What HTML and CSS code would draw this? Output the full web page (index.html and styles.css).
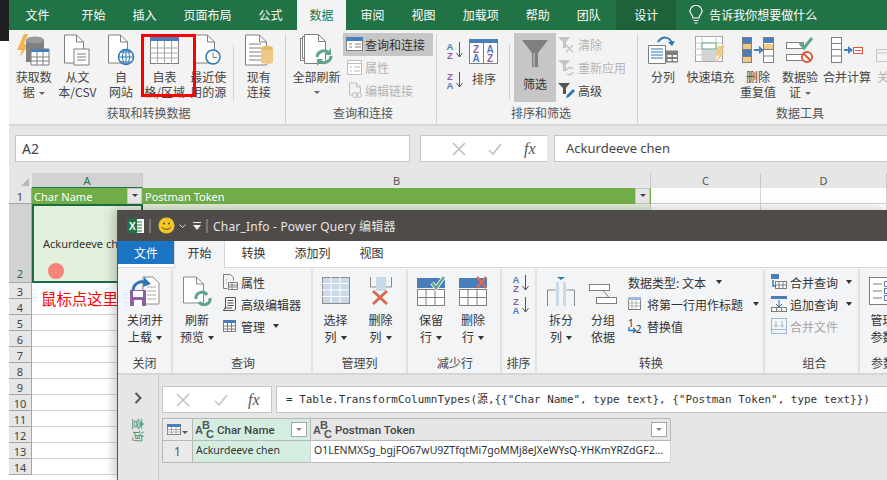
FILE: index.html
```html
<!DOCTYPE html>
<html>
<head>
    <meta charset="utf-8">
    <meta name="viewport" content="width=device-width, initial-scale=1.0">
    <title>Excel - Power Query</title>
    <link rel="stylesheet" href="styles.css">
</head>
<body>

<div class="side-strip"></div>

<!-- excel window -->
<div class="excel">
    <div class="tabs">
        <span class="tab tab-file">文件</span>
        <span class="tab">开始</span>
        <span class="tab">插入</span>
        <span class="tab">页面布局</span>
        <span class="tab">公式</span>
        <span class="tab tab-on">数据</span>
        <span class="tab">审阅</span>
        <span class="tab">视图</span>
        <span class="tab">加载项</span>
        <span class="tab">帮助</span>
        <span class="tab">团队</span>
        <span class="tab tab-ctx">设计</span>
        <span class="tell">
            <svg width="16" height="20" viewBox="0 0 16 20" fill="none" stroke="#fff" stroke-width="1.2"><path d="M5 13c0-3-3-4-3-7a6 5.500 0 0 1 12 0c0 3-3 4-3 7z"/><path d="M5.500 15.500h5M6.500 18h3"/></svg>
            告诉我你想要做什么
        </span>
    </div>

    <div class="ribbon">
        <div class="group g-get">
            <div class="group-body">
                <div class="big">
                    <svg width="34" height="32" viewBox="0 0 34 32"><path d="M7 0L0 16h5l-2 7L12 10H7l4-10z" fill="#f0b64a"/><path d="M9 6h18v22H9z" fill="#7f7f7f"/><ellipse cx="18" cy="6" rx="9" ry="3.500" fill="#9a9a9a"/><path d="M14 15h18v16H14z" fill="#fff" stroke="#7f7f7f"/><path d="M14 15h18v3H14z" fill="#4a7ebb"/><path d="M14 23h18M14 27h18M20 18v13M26 18v13" stroke="#7f7f7f" fill="none"/></svg>
                    <span>获取数</span><span>据<i class="caret"></i></span>
                </div>
                <div class="big">
                    <svg width="28" height="32" viewBox="0 0 28 32" fill="none" stroke="#7f7f7f"><path d="M1.500 1h12l7 7v21h-19z" fill="#fff"/><path d="M13.500 1v7h7"/><path d="M11 15h15v16H11z" fill="#fff"/><path d="M14 20h9M14 23h9M14 26h9"/></svg>
                    <span>从文</span><span>本/CSV</span>
                </div>
                <div class="big">
                    <svg width="28" height="32" viewBox="0 0 28 32" fill="none"><path d="M1.500 1h12l7 7v21h-19z" fill="#fff" stroke="#7f7f7f"/><path d="M13.500 1v7h7" stroke="#7f7f7f"/><circle cx="19" cy="23" r="7.500" fill="#fff" stroke="#2e75b6" stroke-width="1.500"/><path d="M11.500 23h15M19 15.500v15M14 18h10M14 28h10" stroke="#2e75b6"/><ellipse cx="19" cy="23" rx="3.500" ry="7.500" stroke="#2e75b6"/></svg>
                    <span>自</span><span>网站</span>
                </div>
                <div class="big">
                    <svg width="30" height="32" viewBox="0 0 30 32"><rect x="0.500" y="2.500" width="28" height="27" fill="#fff" stroke="#7f7f7f"/><rect x="0" y="2" width="29" height="5" fill="#4a7ebb"/><path d="M0 14h29M0 19h29M0 24h29M7.500 7v23M14.500 7v23M21.500 7v23" stroke="#a6a6a6" fill="none"/></svg>
                    <span>自表</span><span>格/区域</span>
                </div>
                <div class="big">
                    <svg width="28" height="32" viewBox="0 0 28 32" fill="none" stroke="#7f7f7f"><path d="M1.500 1h12l7 7v21h-19z" fill="#fff"/><path d="M13.500 1v7h7"/><circle cx="19" cy="23" r="7" fill="#fff" stroke="#2e75b6" stroke-width="1.500"/><path d="M19 18.500V23.500h4"/></svg>
                    <span>最近使</span><span>用的源</span>
                </div>
                <div class="sep"></div>
                <div class="big">
                    <svg width="30" height="32" viewBox="0 0 30 32" fill="none" stroke="#7f7f7f"><path d="M1.500 1h14l7 7v23h-21z" fill="#fff"/><path d="M15.500 1v7h7M5 10h12M5 14h12M5 18h12M5 22h12M5 26h12"/><path d="M17 14h12v14c0 2.500-12 2.500-12 0z" fill="#f0c987" stroke="none"/><ellipse cx="23" cy="14" rx="6" ry="2.200" fill="#e7b765" stroke="none"/></svg>
                    <span>现有</span><span>连接</span>
                </div>
            </div>
            <div class="group-name">获取和转换数据</div>
        </div>

        <div class="group g-conn">
            <div class="group-body">
                <div class="big big-all">
                    <svg width="36" height="34" viewBox="0 0 36 34" fill="none" stroke="#7f7f7f"><path d="M1.500 4.500h12v22h-12z" fill="#fff"/><path d="M3.500 2.500h14v22h-14z" fill="#fff"/><path d="M5.500 0.500h14l7 7v22h-21z" fill="#fff"/><path d="M19.500 0.500v7h7"/><path d="M18 23a7 7 0 0 1 12-4" stroke="#5fa58c" stroke-width="3"/><path d="M32 22a7 7 0 0 1-12 4.500" stroke="#5fa58c" stroke-width="3"/><path d="M32 14v7h-6zM18 32v-7h6z" fill="#5fa58c" stroke="none"/></svg>
                    <span>全部刷新</span><i class="caret caret-own"></i>
                </div>
                <div class="stack">
                    <div class="small small-on">
                        <svg width="18" height="15" viewBox="0 0 18 15"><rect x="0.500" y="0.500" width="16" height="13" fill="#fff" stroke="#7f7f7f"/><rect width="17" height="4" fill="#4a7ebb"/><path d="M9 7h6M9 10h6M3 7h3M3 10h3" stroke="#7f7f7f"/></svg>
                        查询和连接
                    </div>
                    <div class="small small-off">
                        <svg width="18" height="15" viewBox="0 0 18 15" fill="none" stroke="#bdbdbd"><rect x="1.500" y="0.500" width="14" height="14" fill="#fff"/><path d="M1 3.500h15M4 7h2M8 7h6M4 11h2M8 11h6"/></svg>
                        属性
                    </div>
                    <div class="small small-off">
                        <svg width="18" height="17" viewBox="0 0 18 17" fill="none" stroke="#bdbdbd"><path d="M3.500 1h7l4 4v6M3.500 1v12h3M10.500 1v4h4"/><circle cx="9" cy="13" r="2.500"/><circle cx="13" cy="13" r="2.500"/></svg>
                        编辑链接
                    </div>
                </div>
            </div>
            <div class="group-name">查询和连接</div>
        </div>

        <div class="group g-sort">
            <div class="group-body">
                <div class="sort-col">
                    <div class="sort-item"><span class="az"><b class="c-a">A</b><b class="c-z">Z</b></span><svg width="7" height="16" viewBox="0 0 7 16" fill="none" stroke="#555"><path d="M3.500 0v15M0.500 11l3 4 3-4"/></svg></div>
                    <div class="sort-item"><span class="az"><b class="c-z">Z</b><b class="c-a">A</b></span><svg width="7" height="16" viewBox="0 0 7 16" fill="none" stroke="#555"><path d="M3.500 0v15M0.500 11l3 4 3-4"/></svg></div>
                </div>
                <div class="big big-sort">
                    <svg class="sort-big" width="30" height="26" viewBox="0 0 30 26" fill="none"><rect x="0.500" y="0.500" width="28" height="24" fill="#fff" stroke="#7f7f7f"/><rect width="29" height="4" fill="#4a7ebb"/><path d="M14.500 4v21" stroke="#7f7f7f"/><text x="7" y="14" class="st-z">Z</text><text x="7" y="23" class="st-a">A</text><text x="21" y="14" class="st-a">A</text><text x="21" y="23" class="st-z">Z</text></svg>
                    <span>排序</span>
                </div>
                <div class="sep sep-sort"></div>
                <div class="filter-btn">
                    <svg width="28" height="28" viewBox="0 0 28 28"><path d="M1 0h26L17 13v14h-6V13z" fill="#7f7f7f"/><path d="M12 13h2v14h-2z" fill="#a6a6a6"/></svg>
                    <span>筛选</span>
                </div>
                <div class="stack stack-filter">
                    <div class="small small-off">
                        <svg width="18" height="16" viewBox="0 0 18 16"><path d="M0 0h12l-4 5v6H5V5z" fill="#c4c4c4"/><path d="M8 8l7 7M15 8l-7 7" stroke="#c4c4c4" stroke-width="1.500"/></svg>
                        清除
                    </div>
                    <div class="small small-off">
                        <svg width="18" height="16" viewBox="0 0 18 16" fill="none"><path d="M0 0h12l-4 5v6H5V5z" fill="#c4c4c4"/><path d="M8 11a4 4 0 0 1 7-2M15 12a4 4 0 0 1-6 2" stroke="#c4c4c4" stroke-width="1.500"/></svg>
                        重新应用
                    </div>
                    <div class="small">
                        <svg width="18" height="16" viewBox="0 0 18 16"><path d="M0 0h12l-4 5v6H5V5z" fill="#555"/><path d="M8 15l1-3 6-6 2 2-6 6z" fill="#2e75b6"/></svg>
                        高级
                    </div>
                </div>
            </div>
            <div class="group-name">排序和筛选</div>
        </div>

        <div class="group g-tools">
            <div class="group-body">
                <div class="big b-split">
                    <svg width="32" height="28" viewBox="0 0 32 28" fill="none"><path d="M1.500 9.500h17v18h-17z" fill="#fff" stroke="#7f7f7f"/><path d="M4 13h12M4 16h12M4 19h12M4 22h12" stroke="#2e75b6"/><path d="M19 14.500h12v12H19z" fill="#7f7f7f"/><path d="M20.500 19h4v2h-4zM26 19h4v2h-4zM20.500 23h4v2h-4zM26 23h4v2h-4z" fill="#fff"/><path d="M11 6c4-6 11-6 14 1" stroke="#2e75b6" stroke-width="2"/><path d="M21 6l4 4 3-5z" fill="#2e75b6"/></svg>
                    <span>分列</span>
                </div>
                <div class="big b-flash">
                    <svg width="32" height="28" viewBox="0 0 32 28" fill="none"><rect x="0.500" y="0.500" width="27" height="25" fill="#fff" stroke="#a6a6a6"/><path d="M0 7h27M0 13h27M0 19h27M7 0v26M21 0v26" stroke="#c8c8c8"/><rect x="7" y="7" width="14" height="6" fill="#fff" stroke="#5fa58c"/><rect x="7" y="14" width="14" height="11" fill="#d4d4d4"/><path d="M23 10h7l-4 6h4l-9 11 3-8h-4z" fill="#f0c987"/></svg>
                    <span>快速填充</span>
                </div>
                <div class="big b-dedupe">
                    <svg width="32" height="26" viewBox="0 0 32 26"><rect width="10" height="26" fill="#7f7f7f"/><rect x="1" y="1" width="8" height="5" fill="#4a7ebb"/><rect x="1" y="7" width="8" height="5" fill="#f0c987"/><rect x="1" y="13" width="8" height="6" fill="#4a7ebb"/><rect x="1" y="20" width="8" height="5" fill="#f0c987"/><path d="M12 13h7" stroke="#4a7ebb" stroke-width="2"/><path d="M17 9l5 4-5 4z" fill="#4a7ebb"/><rect x="21.500" y="0.500" width="10" height="25" fill="#fff" stroke="#7f7f7f"/><rect x="22" y="1" width="9" height="5" fill="#4a7ebb"/><rect x="22" y="7" width="9" height="5" fill="#f0c987"/><path d="M22 12.500h9M22 19h9" stroke="#7f7f7f"/></svg>
                    <span>删除</span><span>重复值</span>
                </div>
                <div class="big b-valid">
                    <svg width="28" height="28" viewBox="0 0 28 28" fill="none"><rect x="0.500" y="6.500" width="17" height="6" fill="#fff" stroke="#7f7f7f"/><rect x="0.500" y="18.500" width="17" height="6" fill="#fff" stroke="#7f7f7f"/><path d="M14 7l4 5 8-10" stroke="#5fa58c" stroke-width="3"/><circle cx="21" cy="21" r="5" fill="#fff" stroke="#d9573b" stroke-width="2"/><path d="M17.500 17.500l7 7" stroke="#d9573b" stroke-width="2"/></svg>
                    <span>数据验</span><span>证<i class="caret"></i></span>
                </div>
                <div class="big b-merge">
                    <svg width="32" height="26" viewBox="0 0 32 26" fill="none"><rect x="0.500" y="0.500" width="10" height="25" fill="#fff" stroke="#7f7f7f"/><path d="M0 6.500h10M0 12.500h10M0 19h10" stroke="#7f7f7f"/><path d="M13 13h6" stroke="#4a7ebb" stroke-width="2"/><path d="M17 9l5 4-5 4z" fill="#4a7ebb"/><rect x="22.500" y="10.500" width="9" height="6" fill="#fff" stroke="#d9573b"/><path d="M24 13.500h6" stroke="#d9573b"/></svg>
                    <span>合并计算</span>
                </div>
                <div class="big b-more">
                    <svg width="14" height="26" viewBox="0 0 14 26" fill="none" stroke="#c4c4c4"><path d="M0.500 12.500h13v12h-13zM0 16h14"/></svg>
                    <span class="off-text">关</span>
                </div>
            </div>
            <div class="group-name">数据工具</div>
        </div>
    </div>

    <!-- formula row -->
    <div class="formula-row">
        <div class="name-box">A2</div>
        <div class="fx-box">
            <svg width="14" height="14" viewBox="0 0 14 14" stroke="#bdbdbd" stroke-width="1.600" fill="none"><path d="M1 1l12 12M13 1L1 13"/></svg>
            <svg width="14" height="14" viewBox="0 0 14 14" stroke="#bdbdbd" stroke-width="1.600" fill="none"><path d="M1 8l4 4 8-10"/></svg>
            <span class="fx">fx</span>
        </div>
        <div class="formula-text">Ackurdeeve chen</div>
    </div>

    <!-- sheet -->
    <div class="sheet">
        <div class="corner"><i></i></div>
        <div class="col-head col-on">A</div>
        <div class="col-head">B</div>
        <div class="col-head">C</div>
        <div class="col-head">D</div>

        <div class="row-head">1</div>
        <div class="cell cell-title">Char Name<i class="cell-filter"></i></div>
        <div class="cell cell-title">Postman Token<i class="cell-filter"></i></div>
        <div class="cell"></div>
        <div class="cell"></div>

        <div class="row-head row-tall">2</div>
        <div class="cell cell-sel">Ackurdeeve chen<i class="click-dot"></i></div>
        <div class="cell cell-green"></div>
        <div class="cell"></div>
        <div class="cell"></div>

        <div class="row-head">3</div>
        <div class="cell cell-note">鼠标点这里</div>
        <div class="cell"></div>
        <div class="cell"></div>
        <div class="cell"></div>

        <div class="row-head">4</div><div class="cell"></div><div class="cell"></div><div class="cell"></div><div class="cell"></div>
        <div class="row-head">5</div><div class="cell"></div><div class="cell"></div><div class="cell"></div><div class="cell"></div>
        <div class="row-head">6</div><div class="cell"></div><div class="cell"></div><div class="cell"></div><div class="cell"></div>
        <div class="row-head">7</div><div class="cell"></div><div class="cell"></div><div class="cell"></div><div class="cell"></div>
        <div class="row-head">8</div><div class="cell"></div><div class="cell"></div><div class="cell"></div><div class="cell"></div>
        <div class="row-head">9</div><div class="cell"></div><div class="cell"></div><div class="cell"></div><div class="cell"></div>
        <div class="row-head">10</div><div class="cell"></div><div class="cell"></div><div class="cell"></div><div class="cell"></div>
        <div class="row-head">11</div><div class="cell"></div><div class="cell"></div><div class="cell"></div><div class="cell"></div>
        <div class="row-head">12</div><div class="cell"></div><div class="cell"></div><div class="cell"></div><div class="cell"></div>
        <div class="row-head">13</div><div class="cell"></div><div class="cell"></div><div class="cell"></div><div class="cell"></div>
        <div class="row-head">14</div><div class="cell"></div><div class="cell"></div><div class="cell"></div><div class="cell"></div>
    </div>
</div>

<!-- red box drawn on the screenshot -->
<div class="red-box"></div>

<!-- power query window -->
<div class="pq">
    <div class="pq-title">
        <svg width="17" height="16" viewBox="0 0 17 16"><rect x="7" y="1" width="10" height="14" fill="#fff"/><path d="M9 4h6M9 7h6M9 10h6M9 13h6" stroke="#217346"/><path d="M0 1.500L10 0v16L0 14.500z" fill="#217346"/><text x="2" y="12" class="x-mark">X</text></svg>
        <i class="pq-bar"></i>
        <svg class="smile" width="17" height="17" viewBox="0 0 17 17" fill="none"><circle cx="8.500" cy="8.500" r="8" fill="#f7c51e"/><circle cx="6" cy="6.500" r="1" fill="#4f4b48"/><circle cx="11" cy="6.500" r="1" fill="#4f4b48"/><path d="M4 10c1 3 8 3 9 0" stroke="#4f4b48"/></svg>
        <svg class="chev" width="7" height="4" viewBox="0 0 7 4" fill="none" stroke="#ddd"><path d="M0.500 0.500l3 3 3-3"/></svg>
        <svg class="qat" width="8" height="8" viewBox="0 0 8 8"><path d="M0 0h8v1H0z" fill="#eee"/><path d="M0 3h8L4 8z" fill="#eee"/></svg>
        <i class="pq-bar"></i>
        <span class="pq-name">Char_Info - Power Query 编辑器</span>
    </div>

    <div class="pq-tabs">
        <span class="pq-tab pq-file">文件</span>
        <span class="pq-tab pq-on">开始</span>
        <span class="pq-tab">转换</span>
        <span class="pq-tab">添加列</span>
        <span class="pq-tab">视图</span>
    </div>

    <div class="pq-ribbon">
        <div class="pg pg-close">
            <div class="pg-body">
                <div class="pbig">
                    <svg width="30" height="30" viewBox="0 0 30 30" fill="none"><path d="M13 1h10l6 6v21H13z" fill="#fff" stroke="#8a8a8a"/><path d="M17 11h9M17 15h9M17 19h9M17 23h9" stroke="#a6a6a6"/><path d="M3 14c1-7 8-10 13-7" stroke="#2e75b6" stroke-width="3"/><path d="M14 1l7 7-8 3z" fill="#2e75b6"/><rect x="0" y="14" width="16" height="16" fill="#8e5ea2"/><rect x="3" y="15" width="10" height="6" fill="#fff"/><rect x="4" y="24" width="8" height="6" fill="#fff"/></svg>
                    <span>关闭并</span><span>上载<i class="caret caret-dark"></i></span>
                </div>
            </div>
            <div class="pg-name">关闭</div>
        </div>
        <div class="pg pg-query">
            <div class="pg-body">
                <div class="pbig pbig-refresh">
                    <svg width="30" height="30" viewBox="0 0 30 30" fill="none"><path d="M1.500 1h13l7 7v19h-20z" fill="#fff" stroke="#8a8a8a"/><path d="M14.500 1v7h7" stroke="#8a8a8a"/><path d="M14 23a6 6 0 0 1 11-4" stroke="#5fa58c" stroke-width="3"/><path d="M28 22a6 6 0 0 1-11 4" stroke="#5fa58c" stroke-width="3"/></svg>
                    <span>刷新</span><span>预览<i class="caret caret-dark"></i></span>
                </div>
                <div class="pstack pstack-query">
                    <div class="psmall">
                        <svg width="16" height="16" viewBox="0 0 16 16" fill="none" stroke="#7f7f7f"><path d="M1.500 0.500h7l3 3v3M1.500 0.500v14h4M4 6h1M4 9h1"/><path d="M6.500 8.500h9v7h-9z" fill="#fff"/><path d="M6 11h9M6 13h9M10 9v6" /></svg>
                        属性
                    </div>
                    <div class="psmall">
                        <svg width="16" height="16" viewBox="0 0 16 16" fill="none" stroke="#555"><path d="M3.500 12V1.500h10V12c0 2-1 2.500-2 2.500H1c1-.5 1.500-1 1.500-2.500H10"/><path d="M5.500 4.500h6M5.500 7h6M5.500 9.500h6"/></svg>
                        高级编辑器
                    </div>
                    <div class="psmall">
                        <svg width="16" height="14" viewBox="0 0 16 14" fill="none"><rect x="1.500" y="1.500" width="12" height="11" fill="#fff" stroke="#7f7f7f"/><rect x="1" y="1" width="13" height="3" fill="#4a7ebb"/><path d="M1 7h13M1 10h13M5.500 4v9M9.500 4v9" stroke="#7f7f7f"/></svg>
                        管理<i class="caret caret-dark"></i>
                    </div>
                </div>
            </div>
            <div class="pg-name">查询</div>
        </div>
        <div class="pg pg-cols">
            <div class="pg-body">
                <div class="pbig">
                    <svg width="28" height="28" viewBox="0 0 28 28"><rect x="0.500" y="0.500" width="27" height="26" fill="#c9d9ea" stroke="#8a8a8a"/><path d="M0 6.500h27M0 13h27M0 19.500h27M9 0v26M18 0v26" stroke="#fff"/></svg>
                    <span>选择</span><span>列<i class="caret caret-dark"></i></span>
                </div>
                <div class="pbig">
                    <svg width="28" height="28" viewBox="0 0 28 28" fill="none"><path d="M3.500 0v10h21V0" stroke="#8a8a8a"/><path d="M9 0h10v14H9z" fill="#c9d9ea"/><path d="M6 14l14 13M20 14L6 27" stroke="#d9694f" stroke-width="3"/></svg>
                    <span>删除</span><span>列<i class="caret caret-dark"></i></span>
                </div>
            </div>
            <div class="pg-name">管理列</div>
        </div>
        <div class="pg pg-rows">
            <div class="pg-body">
                <div class="pbig">
                    <svg width="28" height="30" viewBox="0 0 28 30" fill="none"><rect x="0" y="2" width="28" height="10" fill="#4a7ebb"/><rect x="0.500" y="13.500" width="27" height="16" stroke="#7f7f7f" fill="#fff"/><path d="M0 21.500h27M9 13v16M18 13v16" stroke="#7f7f7f"/><path d="M15 7l4 5 8-11" stroke="#fff" stroke-width="4"/><path d="M15 7l4 5 8-11" stroke="#5fa58c" stroke-width="2.400"/></svg>
                    <span>保留</span><span>行<i class="caret caret-dark"></i></span>
                </div>
                <div class="pbig">
                    <svg width="28" height="30" viewBox="0 0 28 30" fill="none"><rect x="0" y="2" width="28" height="10" fill="#4a7ebb"/><rect x="0.500" y="13.500" width="27" height="16" stroke="#7f7f7f" fill="#fff"/><path d="M0 21.500h27M9 13v16M18 13v16" stroke="#7f7f7f"/><path d="M18 1l9 11M27 1l-9 11" stroke="#d9694f" stroke-width="2.400"/></svg>
                    <span>删除</span><span>行<i class="caret caret-dark"></i></span>
                </div>
            </div>
            <div class="pg-name">减少行</div>
        </div>
        <div class="pg pg-psort">
            <div class="pg-body">
                <div class="sort-col sort-col-pq">
                    <div class="sort-item"><span class="az"><b class="c-a">A</b><b class="c-z">Z</b></span><svg width="7" height="16" viewBox="0 0 7 16" fill="none" stroke="#555"><path d="M3.500 0v15M0.500 11l3 4 3-4"/></svg></div>
                    <div class="sort-item"><span class="az"><b class="c-z">Z</b><b class="c-a">A</b></span><svg width="7" height="16" viewBox="0 0 7 16" fill="none" stroke="#555"><path d="M3.500 0v15M0.500 11l3 4 3-4"/></svg></div>
                </div>
            </div>
            <div class="pg-name">排序</div>
        </div>
        <div class="pg pg-trans">
            <div class="pg-body">
                <div class="pbig pbig-split">
                    <svg width="28" height="30" viewBox="0 0 28 30" fill="none"><path d="M0.500 30V14h8M27.500 30V14h-8" stroke="#8a8a8a"/><path d="M9 6h3v24H9zM16 6h3v24h-3z" fill="#c9d9ea"/><path d="M10 1h8l-4 3z" fill="#2e75b6"/></svg>
                    <span>拆分</span><span>列<i class="caret caret-dark"></i></span>
                </div>
                <div class="pbig pbig-group">
                    <svg width="28" height="30" viewBox="0 0 28 30" fill="none" stroke="#7f7f7f"><rect x="0.500" y="8.500" width="20" height="6" fill="#fff"/><rect x="7.500" y="21.500" width="20" height="6" fill="#fff"/><path d="M14 14.500l6 7"/></svg>
                    <span>分组</span><span>依据</span>
                </div>
                <div class="pstack pstack-trans">
                    <div class="psmall psmall-plain">数据类型: 文本<i class="caret caret-dark"></i></div>
                    <div class="psmall">
                        <svg width="14" height="14" viewBox="0 0 14 14"><rect x="0.500" y="0.500" width="12" height="12" fill="#fff" stroke="#7f7f7f"/><rect width="13" height="3" fill="#9fb8d6"/><path d="M0 6h12M0 9h12M4 3v9M8 3v9" stroke="#b0b0b0"/></svg>
                        将第一行用作标题<i class="caret caret-dark"></i>
                    </div>
                    <div class="psmall">
                        <span class="repl"><b>1</b><svg width="9" height="7" viewBox="0 0 9 7" fill="none" stroke="#2e75b6" stroke-width="1.400"><path d="M1 0v3.500h6M5 1l3 2.500L5 6"/></svg><b>2</b></span>
                        替换值
                    </div>
                </div>
            </div>
            <div class="pg-name">转换</div>
        </div>
        <div class="pg pg-comb">
            <div class="pg-body">
                <div class="pstack pstack-comb">
                    <div class="psmall">
                        <svg width="16" height="16" viewBox="0 0 16 16" fill="none"><path d="M0 0h8v5H0z" fill="#4a7ebb"/><rect x="4.500" y="7.500" width="11" height="7" fill="#fff" stroke="#7f7f7f"/><path d="M4 11h11M8 7v8M12 7v8" stroke="#7f7f7f"/><path d="M2 6v6h3" stroke="#2e75b6" stroke-width="1.400"/></svg>
                        合并查询<i class="caret caret-dark"></i>
                    </div>
                    <div class="psmall">
                        <svg width="16" height="16" viewBox="0 0 16 16" fill="none"><path d="M0 0h16v3H0z" fill="#4a7ebb"/><path d="M8 4v7M5 8l3 3 3-3" stroke="#2e75b6"/><rect x="0.500" y="11.500" width="15" height="4" stroke="#7f7f7f"/><path d="M5.500 11v5M10.500 11v5" stroke="#7f7f7f"/></svg>
                        追加查询<i class="caret caret-dark"></i>
                    </div>
                    <div class="psmall psmall-off">
                        <svg width="16" height="16" viewBox="0 0 16 16" fill="none" stroke="#9fb8d6"><rect x="0.500" y="0.500" width="15" height="15"/><path d="M0 11.500h16M5 3v6M3 7l2 2 2-2M11 3v6M9 7l2 2 2-2"/></svg>
                        合并文件
                    </div>
                </div>
            </div>
            <div class="pg-name">组合</div>
        </div>
        <div class="pg pg-param">
            <div class="pg-body">
                <div class="pbig">
                    <svg width="28" height="28" viewBox="0 0 28 28" fill="none"><rect x="0.500" y="0.500" width="27" height="27" fill="#fff" stroke="#7f7f7f"/><path d="M4 7h9M4 14h9M4 21h9" stroke="#7f7f7f"/><path d="M15.500 4.500h8v5h-8zM15.500 11.500h8v5h-8zM15.500 18.500h8v5h-8z" stroke="#4a7ebb"/></svg>
                    <span>管理</span><span>参数</span>
                </div>
            </div>
            <div class="pg-name">参数</div>
        </div>
    </div>

    <div class="pq-body">
        <div class="pq-side">
            <svg width="9" height="12" viewBox="0 0 9 12" fill="none" stroke="#555" stroke-width="2"><path d="M1.500 1l5 5-5 5"/></svg>
            <span class="pq-side-text">查询</span>
        </div>
        <div class="pq-main">
            <div class="pq-formula">
                <div class="pq-fx-box">
                    <svg width="14" height="14" viewBox="0 0 14 14" stroke="#c4c4c4" stroke-width="1.600" fill="none"><path d="M1 1l12 12M13 1L1 13"/></svg>
                    <svg width="14" height="14" viewBox="0 0 14 14" stroke="#c4c4c4" stroke-width="1.600" fill="none"><path d="M1 8l4 4 8-10"/></svg>
                    <span class="fx">fx</span>
                </div>
                <div class="pq-formula-text">= Table.TransformColumnTypes(源,{{"Char Name", type text}, {"Postman Token", type text}})</div>
            </div>
            <div class="data">
                <div class="d-corner">
                    <svg width="14" height="11" viewBox="0 0 14 11" fill="none"><rect x="0.500" y="0.500" width="13" height="10" fill="#fff" stroke="#7f7f7f"/><rect width="14" height="3" fill="#4a7ebb"/><path d="M0 5.500h13M0 8h13M4.500 3v8M9 3v8" stroke="#a6a6a6"/></svg>
                    <i class="d-arrow"></i>
                </div>
                <div class="d-head d-head-on"><span class="abc">A<sup>B</sup><sub>C</sub></span>Char Name<i class="d-filter"></i></div>
                <div class="d-head"><span class="abc">A<sup>B</sup><sub>C</sub></span>Postman Token<i class="d-filter"></i></div>
                <div class="d-num">1</div>
                <div class="d-cell d-cell-on">Ackurdeeve chen</div>
                <div class="d-cell">O1LENMXSg_bgjFO67wU9ZTfqtMi7goMMj8eJXeWYsQ-YHKmYRZdGF2...</div>
            </div>
        </div>
    </div>
</div>

</body>
</html>
```

FILE: styles.css
```css
* {
    box-sizing: border-box;
}

html, body {
    margin: 0;
    height: 480px;
    overflow: hidden;
}

body {
    position: relative;
    display: flex;
    background-color: #ffffff;
    font-family: "Noto Sans CJK SC", "Noto Sans", sans-serif;
    font-size: 12px;
    color: #444444;
}

svg {
    display: block;
    flex: none;
}

.side-strip {
    width: 9px;
    height: 41px;
    flex: none;
    background-color: #1f1f1f;
}

.excel {
    width: 878px;
    flex: none;
}

/* excel tabs */
.tabs {
    display: flex;
    height: 30px;
    background-color: #217346;
    color: #ffffff;
    line-height: 30px;
    padding-left: 3px;
}

.tab {
    padding: 0 13.5px;
}

.tab-file {
    margin-right: 5px;
}

.tab-on {
    background-color: #f3f3f3;
    color: #217346;
    padding: 0 12.5px;
    margin: 0 1px 0 1px;
}

.tab-ctx {
    background-color: #1e6239;
    width: 60px;
    padding: 0;
    text-align: center;
    margin-left: 2px;
}

.tell {
    display: flex;
    align-items: center;
    gap: 5px;
    margin-left: 12px;
}

/* excel ribbon */
.ribbon {
    display: flex;
    height: 96px;
    background-color: #f3f3f3;
    border-bottom: 2px solid #d6d6d6;
    overflow: hidden;
}

.group {
    flex: none;
    height: 90px;
    margin-top: 4px;
    display: flex;
    flex-direction: column;
    border-right: 1px solid #d2d2d2;
}

.g-get { width: 277px; padding-left: 3px; }
.g-conn { width: 151px; padding-left: 4px; }
.g-sort { width: 201px; padding-left: 8px; }
.g-tools { width: 324px; border-right: 0; }

.group-body {
    flex: 1;
    display: flex;
    min-height: 0;
}

.group-name {
    height: 20px;
    line-height: 18px;
    text-align: center;
    color: #555555;
}

.big {
    width: 43.6px;
    flex: none;
    display: flex;
    flex-direction: column;
    align-items: center;
    line-height: 15px;
    white-space: nowrap;
}

.big svg {
    height: 32px;
    margin-bottom: 3px;
}

.sep {
    width: 1px;
    height: 56px;
    margin: 11px 3px 0 3px;
    background-color: #d2d2d2;
}

.caret {
    display: inline-block;
    width: 0;
    height: 0;
    margin-left: 4px;
    vertical-align: 2px;
    border-left: 3px solid transparent;
    border-right: 3px solid transparent;
    border-top: 3px solid #666666;
}

.caret-dark {
    border-left-width: 3.500px;
    border-right-width: 3.500px;
    border-top: 4px solid #333333;
}

.caret-own {
    margin: 7px 0 0 0;
}

.big-all {
    width: 53px;
}

.big-all svg {
    height: 34px;
    margin: 0 0 1px 0;
}

.stack {
    display: flex;
    flex-direction: column;
    width: 90px;
    margin-top: -1px;
}

.small {
    display: flex;
    align-items: center;
    gap: 1px;
    height: 23px;
    padding-left: 3px;
    white-space: nowrap;
}

.small-on {
    background-color: #c6c6c6;
    color: #333333;
}

.small-off {
    color: #b3b3b3;
}

.sort-col {
    width: 20px;
    padding-top: 8px;
    display: flex;
    flex-direction: column;
    gap: 13px;
}

.sort-item {
    display: flex;
    gap: 1px;
    height: 17px;
}

.az {
    display: flex;
    flex-direction: column;
    width: 10px;
    font: bold 9.500px/9px "Liberation Sans", sans-serif;
    text-align: center;
}

.az b { display: block; }
.c-a { color: #4a7ebb; }
.c-z { color: #8e5ea2; }

.big-sort {
    width: 36px;
    margin-left: 1px;
}

.big-sort .sort-big {
    height: 26px;
    margin: 5px 0 6px 0;
}

.st-a, .st-z {
    font: bold 10px "Liberation Sans", sans-serif;
    text-anchor: middle;
    stroke: none;
}

.st-a { fill: #4a7ebb; }
.st-z { fill: #8e5ea2; }

.sep-sort {
    margin: 10px 4px 0 7px;
}

.filter-btn {
    width: 42px;
    height: 69px;
    margin-top: -1px;
    flex: none;
    display: flex;
    flex-direction: column;
    align-items: center;
    gap: 8px;
    padding-top: 7px;
    background-color: #c6c6c6;
    line-height: 15px;
    color: #333333;
}

.stack-filter {
    width: 79px;
    margin-left: 2px;
}

.stack-filter .small {
    padding-left: 0;
    gap: 2px;
}

.b-split { width: 50px; }
.b-flash { width: 45px; }
.b-dedupe { width: 50px; }
.b-valid { width: 34px; }
.b-merge { width: 60px; }
.b-more { width: 12px; }

.off-text {
    color: #b3b3b3;
}

/* formula row */
.formula-row {
    display: flex;
    height: 47px;
    padding: 9px 0 11px 6px;
    background-color: #e6e6e6;
}

.name-box, .fx-box, .formula-text {
    background-color: #ffffff;
    border: 1px solid #c6c6c6;
    line-height: 25px;
}

.name-box {
    width: 395px;
    padding-left: 6px;
    font: 14px/25px "Noto Sans", sans-serif;
    color: #444444;
}

.fx-box {
    width: 127px;
    margin-left: 10px;
    display: flex;
    align-items: center;
    gap: 22px;
    padding-left: 31px;
    border-right: 0;
}

.fx {
    font: italic 16px "Liberation Serif", serif;
    color: #555555;
}

.formula-text {
    flex: 1;
    margin-left: 7px;
    padding-left: 11px;
    border-right: 0;
    font: 13px/25px "Noto Sans", sans-serif;
    color: #444444;
}

/* sheet */
.sheet {
    display: grid;
    grid-template-columns: 23px 111px 508px 110px 126px;
    grid-template-rows: 15px 16px 79px repeat(12, 16px);
    background-color: #ffffff;
}

.corner {
    background-color: #e6e6e6;
    position: relative;
}

.corner i {
    position: absolute;
    right: 3px;
    bottom: 2px;
    width: 0;
    height: 0;
    border-left: 8px solid transparent;
    border-bottom: 8px solid #b8b8b8;
}

.col-head {
    background-color: #e6e6e6;
    border-right: 1px solid #c6c6c6;
    text-align: center;
    font: 11px/15px "Noto Sans", sans-serif;
    color: #555555;
}

.col-on {
    background-color: #d2d2d2;
    color: #217346;
    border-bottom: 1px solid #217346;
}

.row-head {
    background-color: #e6e6e6;
    border-bottom: 1px solid #a6a6a6;
    border-right: 1px solid #a6a6a6;
    text-align: center;
    font: 11px/17px "Noto Sans", sans-serif;
    color: #444444;
}

.row-tall {
    display: flex;
    align-items: flex-end;
    justify-content: center;
    background-color: #d2d2d2;
    color: #217346;
}

.cell {
    border-right: 1px solid #d4d4d4;
    border-bottom: 1px solid #d4d4d4;
    position: relative;
    font: 11px/15px "Noto Sans", sans-serif;
    color: #333333;
    white-space: nowrap;
}

.cell-title {
    background-color: #70ad47;
    color: #ffffff;
    padding-left: 2px;
    line-height: 18px;
    border-right: 1px solid #70ad47;
    border-bottom: 0;
}

.cell-filter {
    position: absolute;
    right: 0;
    top: 0;
    width: 15px;
    height: 16px;
    background-color: #e6e6e6;
    border: 1px solid #c6c6c6;
}

.cell-filter::after {
    content: "";
    position: absolute;
    left: 4px;
    top: 5px;
    border-left: 3px solid transparent;
    border-right: 3px solid transparent;
    border-top: 3px solid #444444;
}

.cell-sel {
    background-color: #e2efda;
    border: 2px solid #1e6b41;
    padding: 30px 0 0 9px;
    overflow: hidden;
}

.cell-green {
    background-color: #e2efda;
}

/* dot marks where the mouse was clicked */
.click-dot {
    position: absolute;
    left: 14px;
    top: 57px;
    width: 16px;
    height: 16px;
    border-radius: 50%;
    background-color: #f4837b;
}

.cell-note {
    color: #ff0000;
    font: 15.400px/16px "Noto Sans CJK SC", sans-serif;
    padding: 7px 0 0 9px;
    border-bottom: 0;
}

.red-box {
    position: absolute;
    left: 141px;
    top: 34px;
    width: 55px;
    height: 63px;
    border: 3px solid #ff0000;
}

/* power query window */
.pq {
    position: absolute;
    left: 117px;
    top: 210px;
    width: 770px;
    height: 270px;
    background-color: #e6e6e6;
    border-left: 1px solid #555555;
    box-shadow: -3px -1px 10px rgba(0, 0, 0, 0.22);
    display: flex;
    flex-direction: column;
}

.pq-title {
    height: 31px;
    flex: none;
    display: flex;
    align-items: center;
    background-color: #4f4b48;
    padding-left: 9px;
}

.x-mark {
    font: bold 10px "Liberation Sans", sans-serif;
    fill: #ffffff;
}

.pq-bar {
    width: 2px;
    height: 14px;
    background-color: #7a7673;
    margin: 0 5px 0 5px;
}

.chev {
    margin-left: 4px;
}

.qat {
    margin-left: 7px;
}

.smile {
    margin-left: 2px;
}

.pq-name {
    color: #e6e6e6;
    font: 12px "Noto Sans", "Noto Sans CJK SC", sans-serif;
    letter-spacing: 0.200px;
    white-space: nowrap;
}

.pq-tabs {
    height: 27px;
    flex: none;
    display: flex;
    background-color: #ffffff;
    line-height: 23px;
    color: #333333;
    border-bottom: 1px solid #d6d6d6;
}

.pq-tab {
    padding: 0 14.500px;
}

.pq-file {
    width: 56px;
    text-align: center;
    background-color: #1a75c4;
    color: #ffffff;
    padding: 0;
    height: 23px;
}

.pq-on {
    width: 51px;
    padding: 0;
    margin-right: 2px;
    text-align: center;
    background-color: #f3f4f6;
    border: 1px solid #d6d6d6;
    border-width: 0 1px 0 1px;
    height: 27px;
}

.pq-ribbon {
    height: 107px;
    flex: none;
    display: flex;
    background-color: #f3f4f6;
    border-bottom: 2px solid #d6d6d6;
    overflow: hidden;
}

.pg {
    flex: none;
    height: 103px;
    margin-top: 2px;
    display: flex;
    flex-direction: column;
    border-right: 2px solid #e0e0e0;
}

.pg-close { width: 55px; }
.pg-query { width: 140px; padding-left: 2px; }
.pg-cols { width: 95px; }
.pg-rows { width: 94px; padding-left: 2px; }
.pg-psort { width: 35px; }
.pg-trans { width: 228px; padding-left: 2px; }
.pg-comb { width: 95px; padding-left: 6px; }
.pg-param { width: 46px; border-right: 0; }

.pg-body {
    flex: 1;
    display: flex;
    min-height: 0;
}

.pg-name {
    height: 21px;
    line-height: 22px;
    text-align: center;
    color: #444444;
}

.pbig {
    width: 45px;
    flex: none;
    display: flex;
    flex-direction: column;
    align-items: center;
    padding-top: 6px;
    line-height: 17px;
    white-space: nowrap;
    color: #333333;
}

.pbig svg {
    height: 30px;
    margin-bottom: 5px;
}

.pg-close .pbig { width: 54px; }
.pg-rows .pbig { width: 42px; }
.pbig-refresh { width: 44px; }
.pbig-split { width: 44px; }
.pbig-group { width: 40px; }

.pstack {
    display: flex;
    flex-direction: column;
    padding-top: 1px;
    white-space: nowrap;
}

.pstack-query { margin-left: 3px; }
.pstack-trans { margin-left: 5px; }
.pstack-trans .psmall { gap: 5px; }

.psmall {
    display: flex;
    align-items: center;
    gap: 3px;
    height: 22px;
    color: #333333;
}

.psmall .caret {
    margin-left: 5px;
    vertical-align: 0;
}

.psmall-off {
    color: #a6a6a6;
}

.repl {
    display: flex;
    width: 14px;
    height: 16px;
    font: 10px "Noto Sans", sans-serif;
}

.repl b {
    font-weight: 400;
    line-height: 10px;
}

.repl b:last-child {
    align-self: flex-end;
}

.repl svg {
    align-self: flex-end;
    margin: 0 -1px 0 -6px;
}

.sort-col-pq {
    padding: 5px 0 0 9px;
    width: 33px;
    gap: 5px;
}

.pq-body {
    flex: 1;
    display: flex;
    min-height: 0;
}

.pq-side {
    width: 41px;
    flex: none;
    border-right: 1px solid #c6c6c6;
    display: flex;
    flex-direction: column;
    align-items: center;
    padding-top: 17px;
    gap: 14px;
}

.pq-side-text {
    writing-mode: vertical-rl;
    text-orientation: sideways;
    color: #3a8f6a;
    line-height: 14px;
}

.pq-main {
    flex: 1;
    padding: 11px 0 0 3px;
}

.pq-formula {
    display: flex;
    height: 27px;
}

.pq-fx-box {
    width: 110px;
    flex: none;
    display: flex;
    align-items: center;
    gap: 24px;
    padding-left: 13px;
    background-color: #ffffff;
    border: 1px solid #c6c6c6;
}

.pq-fx-box .fx {
    margin-left: -4px;
}

.pq-formula-text {
    flex: 1;
    margin-left: 4px;
    padding-left: 9px;
    background-color: #ffffff;
    border: 1px solid #c6c6c6;
    border-right: 0;
    font: 10.950px/25px "DejaVu Sans Mono", "Noto Sans CJK SC", monospace;
    color: #333333;
    white-space: nowrap;
}

.data {
    display: grid;
    grid-template-columns: 30px 118px 360px;
    grid-template-rows: 22px 21px;
    width: 508px;
    margin-top: 5px;
    border: 1px solid #b8b8b8;
    border-width: 1px 0 1px 1px;
}

.d-corner {
    display: flex;
    align-items: center;
    justify-content: center;
    gap: 1px;
    background-color: #eaeaea;
    border-right: 1px solid #b8b8b8;
    border-bottom: 1px solid #b8b8b8;
}

.d-arrow {
    border-left: 3px solid transparent;
    border-right: 3px solid transparent;
    border-top: 3px solid #555555;
    margin-top: 5px;
}

.d-head {
    position: relative;
    display: flex;
    align-items: center;
    background-color: #e6e6e6;
    border-right: 1px solid #b8b8b8;
    border-bottom: 1px solid #b8b8b8;
    font: 500 11.500px Roboto, "Noto Sans", sans-serif;
    color: #444444;
}

.d-head-on {
    background-color: #d3eee0;
}

.abc {
    position: relative;
    width: 24px;
    flex: none;
    height: 20px;
    font: bold 11px/20px "Liberation Sans", sans-serif;
    padding-left: 2px;
    color: #555555;
}

.abc sup, .abc sub {
    position: absolute;
    font-size: 11px;
    line-height: 11px;
}

.abc sup { left: 9px; top: 0; }
.abc sub { left: 13px; bottom: 0; }

.d-filter {
    position: absolute;
    right: 3px;
    top: 3px;
    width: 16px;
    height: 15px;
    background-color: #ffffff;
    border: 1px solid #a6a6a6;
}

.d-filter::after {
    content: "";
    position: absolute;
    left: 4px;
    top: 5px;
    border-left: 3px solid transparent;
    border-right: 3px solid transparent;
    border-top: 3px solid #888888;
}

.d-num {
    background-color: #eaeaea;
    border-right: 1px solid #b8b8b8;
    text-align: center;
    font: 12px/21px "Noto Sans", sans-serif;
    color: #555555;
}

.d-cell {
    background-color: #ffffff;
    padding-left: 3px;
    border-right: 1px solid #d4d4d4;
    font: 10.500px/19px "Noto Sans", sans-serif;
    color: #333333;
    white-space: nowrap;
    overflow: hidden;
}

.d-cell-on {
    background-color: #d3eee0;
}
```
